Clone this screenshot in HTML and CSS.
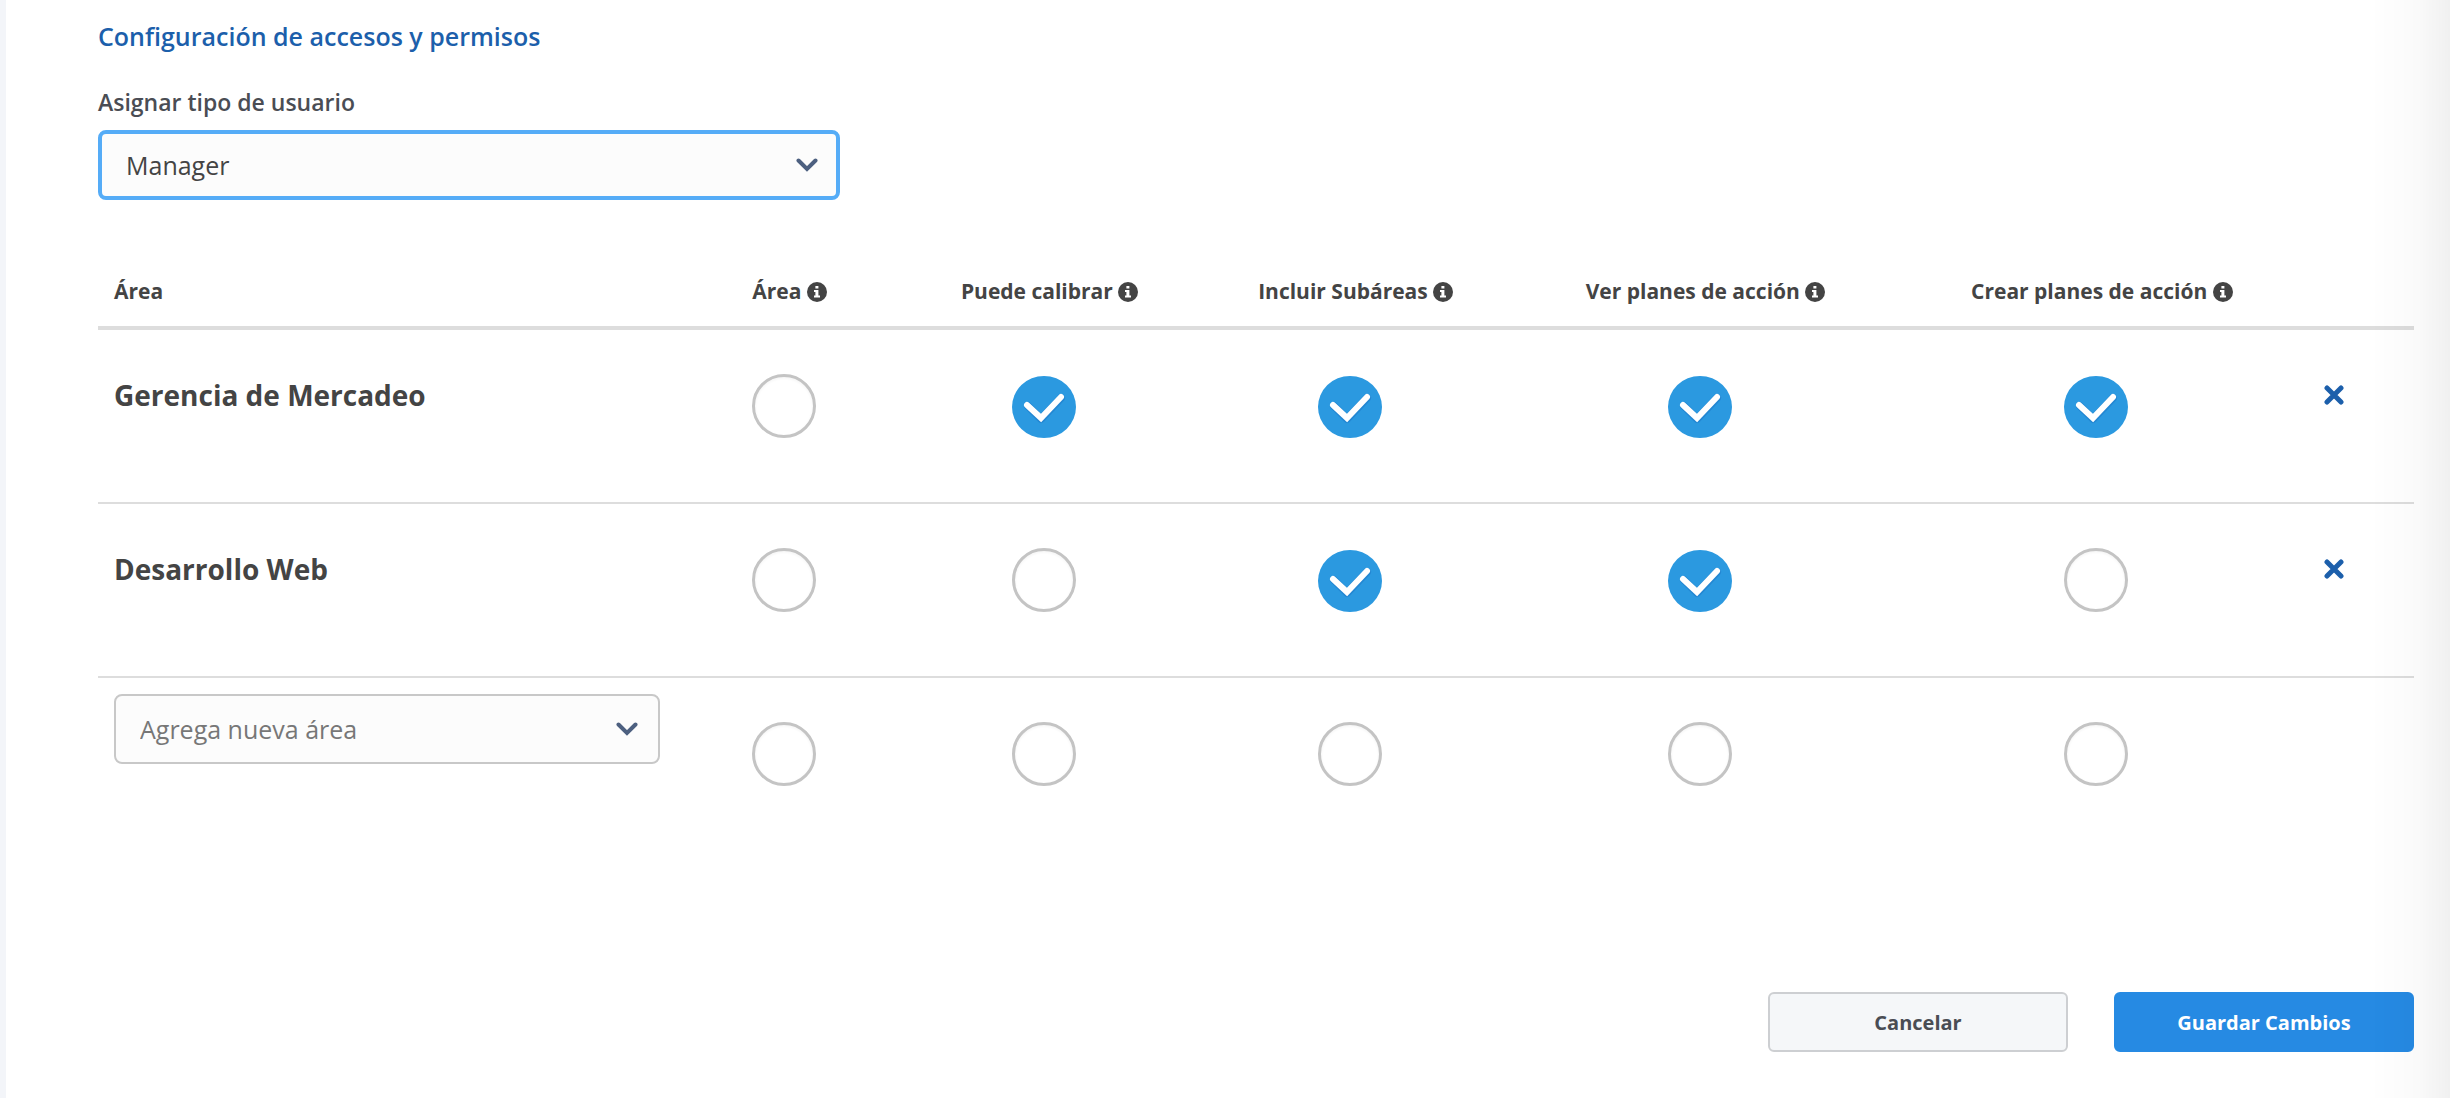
FILE: index.html
```
<!DOCTYPE html>
<html lang="es">
<head>
  <meta charset="UTF-8" />
  <meta name="viewport" content="width=device-width, initial-scale=1.0"/>
  <title>Accesos y permisos</title>
  <link rel="stylesheet" href="styles.css">
</head>
<body>

  <!-- Shared icons -->
  <svg class="sprite" aria-hidden="true">
    <symbol id="icon-info" viewBox="0 0 20 20">
      <circle cx="10" cy="10" r="10" fill="#444"/>
      <path d="M8.400 4h3v2.600h-3zM7 8h4.400v5.400H13v2H7v-2h1.400V10H7z" fill="#fff"/>
    </symbol>
    <symbol id="icon-check" viewBox="0 0 64 64">
      <ellipse cx="32" cy="33" rx="32" ry="31" fill="#2b99e0"/>
      <path d="M16 32l13 13 20-21" fill="none" stroke="#2387d3" stroke-width="8" stroke-linecap="round" stroke-linejoin="round"/>
      <path d="M15 31l14 13 20-21" fill="none" stroke="#fff" stroke-width="6" stroke-linecap="round"/>
    </symbol>
    <symbol id="icon-arrow" viewBox="0 0 22 14">
      <path d="M2.500 2.500L11 11l8.500-8.500" fill="none" stroke="#4d6080" stroke-width="4" stroke-linecap="round"/>
    </symbol>
    <symbol id="icon-close" viewBox="0 0 20 20">
      <path d="M3 3l14 14M17 3L3 17" fill="none" stroke="#1c5fab" stroke-width="5" stroke-linecap="round"/>
    </symbol>
  </svg>

  <main class="panel">
    <h2 class="title">Configuración de accesos y permisos</h2>

    <form>
      <label class="field-label" for="user-type">Asignar tipo de usuario</label>
      <div class="select-box user-type">
        <select id="user-type" class="active">
          <option>Manager</option>
        </select>
        <svg class="arrow"><use href="#icon-arrow"/></svg>
      </div>

      <table class="permissions">
        <thead>
          <tr>
            <th class="col-name">Área</th>
            <th class="col-area">Área <svg class="info"><use href="#icon-info"/></svg></th>
            <th class="col-calibrate">Puede calibrar <svg class="info"><use href="#icon-info"/></svg></th>
            <th class="col-sub">Incluir Subáreas <svg class="info"><use href="#icon-info"/></svg></th>
            <th class="col-view">Ver planes de acción <svg class="info"><use href="#icon-info"/></svg></th>
            <th class="col-create">Crear planes de acción <svg class="info"><use href="#icon-info"/></svg></th>
            <th class="col-remove"></th>
          </tr>
        </thead>
        <tbody>
          <tr>
            <td class="name">Gerencia de Mercadeo</td>
            <td><label class="check"><input type="checkbox" aria-label="Área"><svg><use href="#icon-check"/></svg></label></td>
            <td><label class="check"><input type="checkbox" aria-label="Puede calibrar" checked><svg><use href="#icon-check"/></svg></label></td>
            <td><label class="check"><input type="checkbox" aria-label="Incluir Subáreas" checked><svg><use href="#icon-check"/></svg></label></td>
            <td><label class="check"><input type="checkbox" aria-label="Ver planes de acción" checked><svg><use href="#icon-check"/></svg></label></td>
            <td><label class="check"><input type="checkbox" aria-label="Crear planes de acción" checked><svg><use href="#icon-check"/></svg></label></td>
            <td class="remove"><button type="button" class="remove-btn" aria-label="Eliminar"><svg><use href="#icon-close"/></svg></button></td>
          </tr>
          <tr>
            <td class="name">Desarrollo Web</td>
            <td><label class="check"><input type="checkbox" aria-label="Área"><svg><use href="#icon-check"/></svg></label></td>
            <td><label class="check"><input type="checkbox" aria-label="Puede calibrar"><svg><use href="#icon-check"/></svg></label></td>
            <td><label class="check"><input type="checkbox" aria-label="Incluir Subáreas" checked><svg><use href="#icon-check"/></svg></label></td>
            <td><label class="check"><input type="checkbox" aria-label="Ver planes de acción" checked><svg><use href="#icon-check"/></svg></label></td>
            <td><label class="check"><input type="checkbox" aria-label="Crear planes de acción"><svg><use href="#icon-check"/></svg></label></td>
            <td class="remove"><button type="button" class="remove-btn" aria-label="Eliminar"><svg><use href="#icon-close"/></svg></button></td>
          </tr>
          <tr>
            <td class="new-area">
              <div class="select-box">
                <select aria-label="Nueva área">
                  <option>Agrega nueva área</option>
                </select>
                <svg class="arrow"><use href="#icon-arrow"/></svg>
              </div>
            </td>
            <td><label class="check"><input type="checkbox" aria-label="Área"><svg><use href="#icon-check"/></svg></label></td>
            <td><label class="check"><input type="checkbox" aria-label="Puede calibrar"><svg><use href="#icon-check"/></svg></label></td>
            <td><label class="check"><input type="checkbox" aria-label="Incluir Subáreas"><svg><use href="#icon-check"/></svg></label></td>
            <td><label class="check"><input type="checkbox" aria-label="Ver planes de acción"><svg><use href="#icon-check"/></svg></label></td>
            <td><label class="check"><input type="checkbox" aria-label="Crear planes de acción"><svg><use href="#icon-check"/></svg></label></td>
            <td></td>
          </tr>
        </tbody>
      </table>

      <div class="actions">
        <button type="button" class="btn">Cancelar</button>
        <button type="submit" class="btn btn-primary">Guardar Cambios</button>
      </div>
    </form>
  </main>

</body>
</html>
```
FILE: styles.css
```
* {
  box-sizing: border-box;
}

body {
  margin: 0;
  font-family: 'Open Sans', 'Noto Sans', sans-serif;
  font-size: 23px;
  color: #444;
  background: #fff;
}

/* soft shade on the right edge of the page */
body::after {
  content: "";
  position: fixed;
  top: 0;
  right: 0;
  bottom: 0;
  width: 80px;
  background: linear-gradient(to right, rgba(0,0,0,0), rgba(0,0,0,0.02) 60%, rgba(0,0,0,0.06));
  pointer-events: none;
}

.sprite {
  display: none;
}

.panel {
  min-height: 100vh;
  padding: 20px 36px 46px 92px;
  border-left: 6px solid #f3f5f9;
}

.title {
  margin: 0 0 34px;
  font-size: 25px;
  line-height: 32px;
  font-weight: 600;
  color: #1c5fab;
}

.field-label {
  display: block;
  margin-bottom: 12px;
  line-height: 32px;
  font-weight: 600;
  color: #4a4d54;
}

.select-box {
  display: grid;
  align-items: center;
}

.select-box > * {
  grid-area: 1 / 1;
}

.user-type {
  width: 32%;
  min-width: 742px;
}

select {
  appearance: none;
  width: 100%;
  height: 70px;
  padding: 0 24px;
  font-family: inherit;
  font-size: 25px;
  color: #777;
  background: #fcfcfc;
  border: 2px solid #c8c8c8;
  border-radius: 8px;
}

select.active {
  color: #444;
  border: 4px solid #55acf7;
}

.arrow {
  justify-self: end;
  width: 22px;
  height: 14px;
  margin-right: 22px;
  pointer-events: none;
}

/* Permissions table */
.permissions {
  width: 100%;
  margin-top: 52px;
  table-layout: fixed;
  border-collapse: separate;
  border-spacing: 0;
}

th {
  height: 78px;
  padding: 4px 0 0;
  font-size: 21px;
  font-weight: 700;
  white-space: nowrap;
  border-bottom: 4px solid #ddd;
}

.col-name {
  width: 24.96%;
  padding-left: 16px;
  text-align: left;
}

.col-area { width: 9.8%; }
.col-calibrate { width: 12.66%; }
.col-sub { width: 13.77%; }
.col-view { width: 16.44%; }
.col-create { width: 17.79%; }
.col-remove { width: 4.58%; }

.info {
  width: 20px;
  height: 20px;
  vertical-align: -3px;
}

td {
  height: 174px;
  padding: 44px 12px 0 0;
  text-align: center;
  vertical-align: top;
  border-bottom: 2px solid #ddd;
}

tbody tr:last-child td {
  border-bottom: none;
}

.name {
  padding-left: 16px;
  font-size: 28px;
  line-height: 42px;
  font-weight: 700;
  text-align: left;
}

.new-area {
  padding: 16px 16px 0;
}

.check {
  display: inline-grid;
  width: 64px;
  height: 64px;
  cursor: pointer;
}

.check > * {
  grid-area: 1 / 1;
  width: 64px;
  height: 64px;
  margin: 0;
}

.check input {
  appearance: none;
  border: 3px solid #c4c4c4;
  border-radius: 50%;
  box-shadow: inset 0 1px 3px rgba(0,0,0,0.05);
}

.check svg {
  display: none;
}

.check input:checked {
  border: none;
  box-shadow: none;
}

.check input:checked + svg {
  display: block;
}

.remove {
  padding-left: 16px;
  text-align: left;
}

.remove-btn {
  display: flex;
  align-items: center;
  height: 42px;
  padding: 0;
  background: none;
  border: none;
  cursor: pointer;
}

.remove-btn svg {
  width: 20px;
  height: 20px;
}

/* Footer buttons */
.actions {
  display: flex;
  justify-content: flex-end;
  gap: 46px;
  margin-top: 140px;
}

.btn {
  width: 300px;
  height: 60px;
  font-family: inherit;
  font-size: 20px;
  font-weight: 700;
  color: #4a4d54;
  background: #f5f7f9;
  border: 2px solid #cdcfd2;
  border-radius: 6px;
  cursor: pointer;
}

.btn-primary {
  color: #fff;
  background: #268ae3;
  border-color: #268ae3;
}
```
